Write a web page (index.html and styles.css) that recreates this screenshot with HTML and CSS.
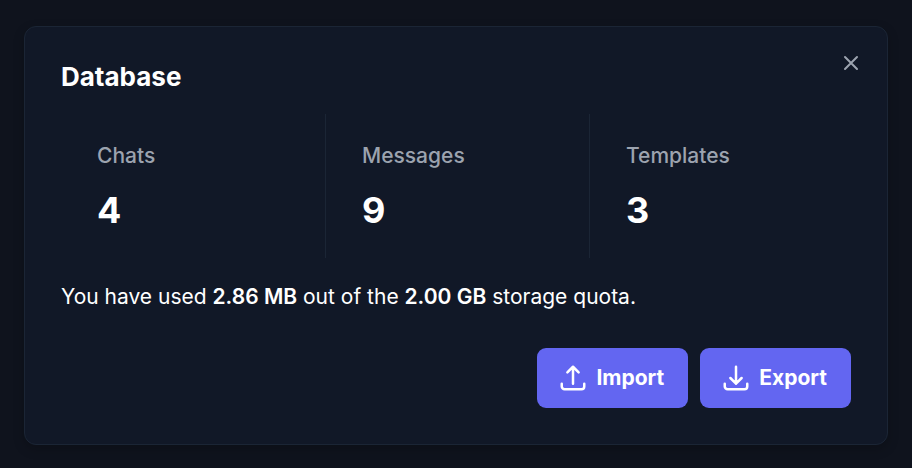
FILE: index.html
```html
<!DOCTYPE html>
<html lang="en">
<head>
<meta charset="utf-8">
<meta name="viewport" content="width=device-width, initial-scale=1">
<title>Database</title>
<link rel="stylesheet" href="styles.css">
</head>
<body>
<main class="dialog" role="dialog" aria-labelledby="title">
  <header class="header">
    <h1 class="title" id="title">Database</h1>
    <button class="close" type="button" aria-label="Close">
      <svg class="close-icon" viewBox="0 0 16 16" aria-hidden="true"><path d="M2 2l12 12m0-12L2 14"/></svg>
    </button>
  </header>
  <dl class="stats">
    <div class="stat"><dt class="label">Chats</dt><dd class="value">4</dd></div>
    <div class="stat"><dt class="label">Messages</dt><dd class="value">9</dd></div>
    <div class="stat"><dt class="label">Templates</dt><dd class="value">3</dd></div>
  </dl>
  <p class="usage">You have used <strong>2.86 MB</strong> out of the <strong>2.00 GB</strong> storage quota.</p>
  <footer class="actions">
    <button class="button" type="button">
      <svg class="icon" viewBox="0 0 24 24" aria-hidden="true"><path d="M3 16.5v2.25A2.25 2.25 0 005.25 21h13.5A2.25 2.25 0 0021 18.75V16.5m-13.5-9L12 3m0 0l4.5 4.5M12 3v13.5"/></svg>
      Import
    </button>
    <button class="button" type="button">
      <svg class="icon" viewBox="0 0 24 24" aria-hidden="true"><path d="M3 16.5v2.25A2.25 2.25 0 005.25 21h13.5A2.25 2.25 0 0021 18.75V16.5M16.5 12L12 16.5m0 0L7.5 12m4.5 4.5V3"/></svg>
      Export
    </button>
  </footer>
</main>
</body>
</html>
```

FILE: styles.css
```css
* { box-sizing: border-box; }

body {
  margin: 0;
  padding: 26px 24px 23px;
  background: #0f131d;
  color: #fff;
  font: 21px/30px Inter, sans-serif;
}

.dialog {
  padding: 35px 36px 36px;
  border: 1px solid #1b2535;
  border-radius: 12px;
  background: #111827;
  box-shadow: 0 4px 12px rgb(0 0 0 / 20%);
}

.header {
  display: flex;
  justify-content: space-between;
  align-items: flex-start;
}

.title {
  margin: 0;
  font-size: 26px;
  line-height: 30px;
  font-weight: 700;
}

.close {
  display: flex;
  margin: -9px -10px 0 0;
  padding: 2px;
  border: 0;
  background: none;
  color: #9ca3af;
}

.close-icon {
  width: 16px;
  height: 16px;
  fill: none;
  stroke: currentColor;
  stroke-width: 2;
  stroke-linecap: round;
}

.stats {
  display: grid;
  grid-template-columns: repeat(3, 1fr);
  gap: 2px;
  margin: 22px 0 24px;
}

.stat {
  padding: 24px 36px;
  border-left: 1px solid #1b2535;
}

.stat:first-child { border-left: 0; }

.label {
  color: #9ca3af;
  line-height: 36px;
  font-weight: 500;
}

.value {
  margin: 12px 0 0;
  font-size: 36px;
  line-height: 48px;
  font-weight: 700;
}

.usage { margin: 0; }

.usage strong { font-weight: 600; }

.actions {
  display: flex;
  justify-content: flex-end;
  gap: 12px;
  margin-top: 36px;
}

.button {
  display: flex;
  align-items: center;
  gap: 8px;
  height: 60px;
  padding: 0 24px 0 21px;
  border: 0;
  border-radius: 9px;
  background: #6366f1;
  color: #fff;
  font: 700 21px/30px Inter, sans-serif;
}

.icon {
  width: 30px;
  height: 30px;
  fill: none;
  stroke: currentColor;
  stroke-width: 2;
  stroke-linecap: round;
  stroke-linejoin: round;
}
```
